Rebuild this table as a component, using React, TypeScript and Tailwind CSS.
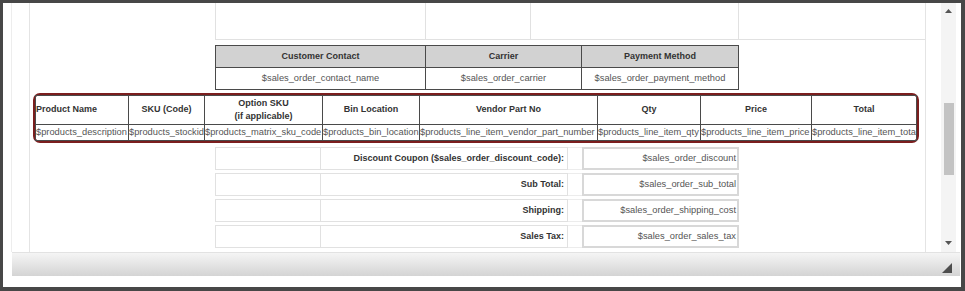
const headCols = [
  { label: "Customer Contact", value: "$sales_order_contact_name", w: "w-[210px]" },
  { label: "Carrier", value: "$sales_order_carrier", w: "w-[156px]" },
  { label: "Payment Method", value: "$sales_order_payment_method", w: "w-[157px]" },
];

const productCols = [
  { label: "Product Name", value: "$products_description", w: "w-[93px]", left: true },
  { label: "SKU (Code)", value: "$products_stockid", w: "w-[76px]" },
  { label: "Option SKU\n(if applicable)", value: "$products_matrix_sku_code", w: "w-[118px]" },
  { label: "Bin Location", value: "$products_bin_location", w: "w-[97px]" },
  { label: "Vendor Part No", value: "$products_line_item_vendor_part_number", w: "w-[178px]" },
  { label: "Qty", value: "$products_line_item_qty", w: "w-[103px]" },
  { label: "Price", value: "$products_line_item_price", w: "w-[111px]" },
  { label: "Total", value: "$products_line_item_total", w: "w-[104px]" },
];

const totals = [
  { label: "Discount Coupon ($sales_order_discount_code):", value: "$sales_order_discount" },
  { label: "Sub Total:", value: "$sales_order_sub_total" },
  { label: "Shipping:", value: "$sales_order_shipping_cost" },
  { label: "Sales Tax:", value: "$sales_order_sales_tax" },
];

function Arrow({ up }: { up?: boolean }) {
  return (
    <svg width="7" height="4" viewBox="0 0 7 4" className="block">
      <path d={up ? "M0 4 L3.5 0 L7 4 Z" : "M0 0 L3.5 4 L7 0 Z"} fill="#555" />
    </svg>
  );
}

export default function App() {
  return (
    <div className="w-[965px] h-[291px] bg-[#474747] pt-[3px] pl-[3px] pr-[4px] pb-[4px] font-['Liberation_Sans',Arial,sans-serif] text-[9.3px]">
      <div className="h-full bg-white flex flex-col">
        <div className="h-[249px] flex">
          {/* editor body */}
          <div className="w-[923px] flex overflow-hidden">
            <div className="w-[8px]" />
            <div className="w-px bg-[#ededed]" />
            <div className="w-[17px]" />
            <div className="w-[897px] border-x border-[#e4e4e4] overflow-hidden">
              {/* clipped table above */}
              <div className="ml-[185px] flex h-[37px] border-l border-b border-[#e1e1e1]">
                <div className="w-[210px] border-r border-[#e1e1e1]" />
                <div className="w-[105px] border-r border-[#e1e1e1]" />
                <div className="w-[208px] border-r border-[#e1e1e1]" />
              </div>

              {/* order info */}
              <div className="ml-[185px] mt-[5px] w-[524px] border-l border-t border-[#4a4a4a]">
                <div className="flex bg-[#d2d2d2]">
                  {headCols.map((c) => (
                    <div key={c.label} className={`${c.w} h-[22px] border-r border-b border-[#4a4a4a] flex items-center justify-center text-[9px] font-bold text-[#333]`}>
                      {c.label}
                    </div>
                  ))}
                </div>
                <div className="flex">
                  {headCols.map((c) => (
                    <div key={c.value} className={`${c.w} h-[22px] border-r border-b border-[#4a4a4a] flex items-center justify-center text-[#555]`}>
                      {c.value}
                    </div>
                  ))}
                </div>
              </div>

              {/* products */}
              <div className="ml-[3px] mt-[3px] w-[886px] border-2 border-[#7b1e1e] rounded-[7px]">
                <div className="border border-[#4a4a4a]">
                  <div className="flex">
                    {productCols.map((c, i) => (
                      <div
                        key={c.label}
                        className={`${c.w} h-[29px] pb-px border-b border-[#4a4a4a] ${i < productCols.length - 1 ? "border-r" : ""} flex items-center ${c.left ? "justify-start text-left" : "justify-center text-center"} text-[9px] font-bold text-[#333] whitespace-pre-line leading-[13px]`}
                      >
                        {c.label}
                      </div>
                    ))}
                  </div>
                  <div className="flex">
                    {productCols.map((c, i) => (
                      <div
                        key={c.value}
                        className={`${c.w} h-[15px] border-[#4a4a4a] ${i < productCols.length - 1 ? "border-r" : ""} overflow-hidden whitespace-nowrap leading-[15px] text-[#555]`}
                      >
                        {c.value}
                      </div>
                    ))}
                  </div>
                </div>
              </div>

              {/* totals */}
              <div className="mt-[4px] flex flex-col gap-[3px]">
                {totals.map((t) => (
                  <div key={t.label} className="ml-[185px] flex h-[23px]">
                    <div className="w-[106px] border border-[#e1e1e1]" />
                    <div className="w-[247px] border-y border-r border-[#e1e1e1] flex items-center justify-end pr-[3px] text-[9px] font-bold text-[#333]">
                      {t.label}
                    </div>
                    <div className="w-[14px] border-y border-[#ececec]" />
                    <div className="w-[157px] border-2 border-[#d8d8d8] flex items-center justify-end pr-[1px] text-[#555]">
                      {t.value}
                    </div>
                  </div>
                ))}
              </div>
            </div>
          </div>

          {/* scrollbar */}
          <div className="w-[15px] ml-[15px] bg-[#f4f4f4] flex flex-col items-center">
            <div className="h-[12px] flex items-end pb-[2px]">
              <Arrow up />
            </div>
            <div className="w-[10px] h-[72px] mt-[88px] bg-[#c3c3c3]" />
            <div className="flex-1" />
            <div className="h-[12px] flex items-start pt-[1px]">
              <Arrow />
            </div>
          </div>
          <div className="flex-1" />
        </div>

        {/* status bar */}
        <div className="ml-[9px] mr-[1px] h-[24px] border-t border-[#e2e2e2] bg-gradient-to-b from-[#f5f5f5] to-[#d4d4d4] flex items-end justify-end pr-[8px] pb-[3px]">
          <svg width="10" height="10" viewBox="0 0 10 10" className="block">
            <path d="M10 0 L10 10 L0 10 Z" fill="#4d4d4d" />
          </svg>
        </div>
        <div className="flex-1" />
      </div>
    </div>
  );
}
